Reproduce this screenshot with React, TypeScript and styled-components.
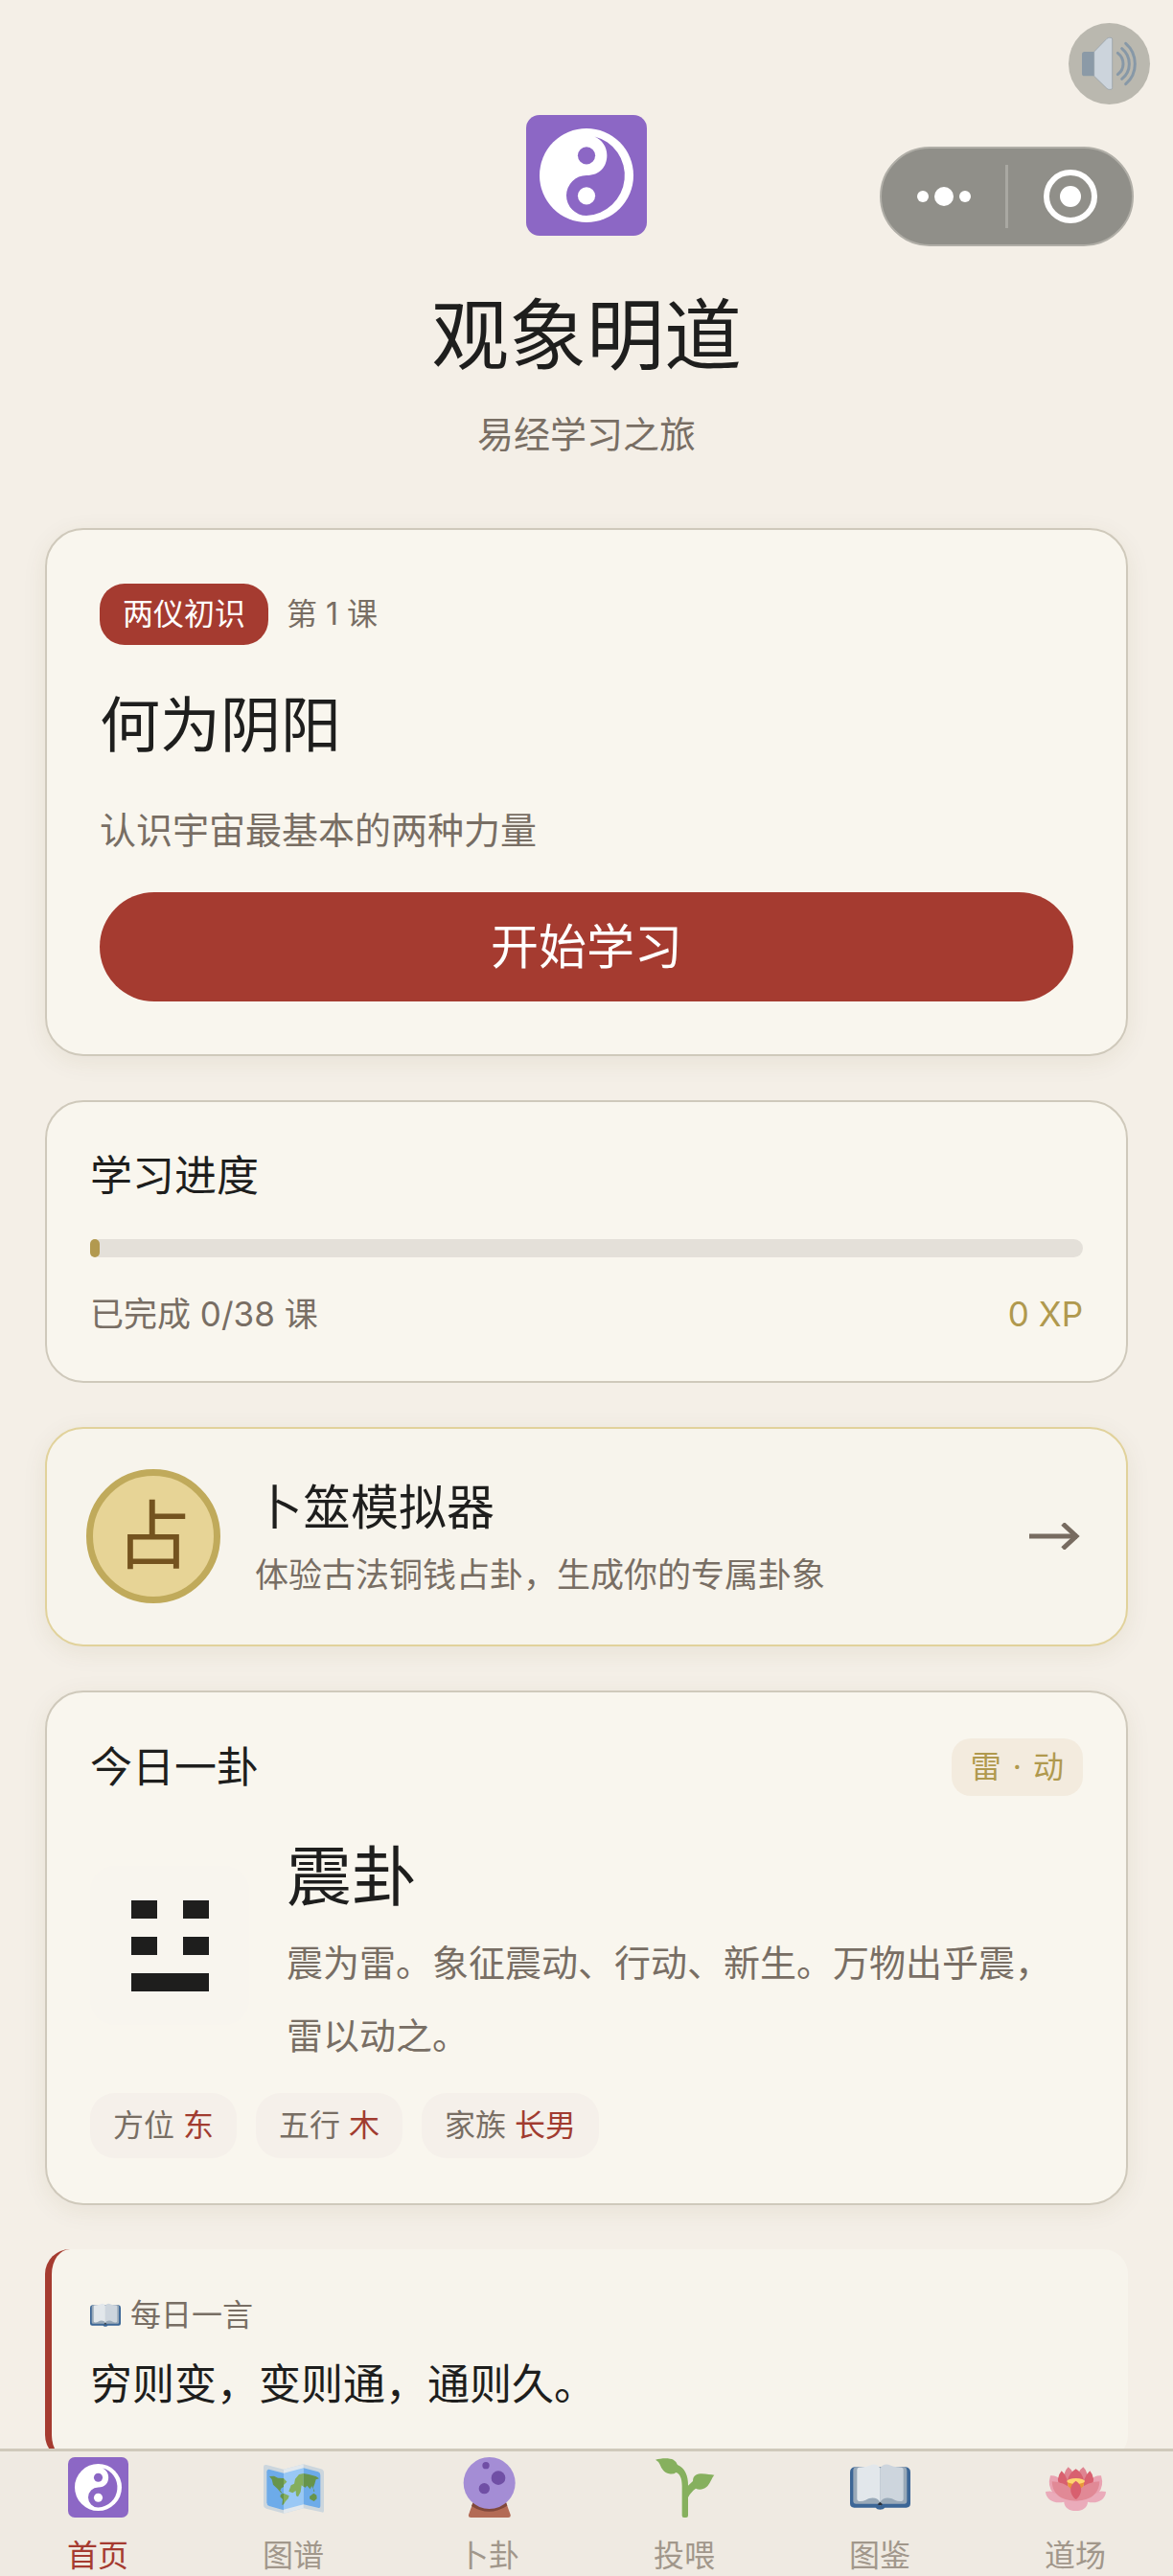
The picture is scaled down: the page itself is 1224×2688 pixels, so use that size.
import React from "react";
import styled, { createGlobalStyle } from "styled-components";

const c = {
  page: "#f4efe7",
  card: "#f9f6ee",
  cardSoft: "#f7f4ec",
  line: "#cfc9bb",
  ink: "#1e1e1d",
  muted: "#786e64",
  red: "#a53b30",
  gold: "#b0994e",
};

const GlobalStyle = createGlobalStyle`
  *, *::before, *::after { box-sizing: border-box; }
  body {
    margin: 0;
    background: ${c.page};
    color: ${c.ink};
    font-family: Inter, "Noto Sans CJK SC", sans-serif;
  }
  h1, h2, h3, p, ul { margin: 0; padding: 0; font-weight: 400; }
  ul { list-style: none; }
  button { font-family: inherit; border: 0; padding: 0; cursor: pointer; }
  a { color: inherit; text-decoration: none; }
  svg { display: block; }
`;

const Page = styled.div`
  position: relative;
  min-height: 100vh;
  padding: 0 47px 112px;
`;

const Header = styled.header`
  display: flex;
  flex-direction: column;
  align-items: center;
  padding: 120px 0 70px;
`;

const AppTitle = styled.h1`
  margin-top: 48px;
  font-size: 81px;
  line-height: 112px;
`;

const Subtitle = styled.p`
  margin-top: 19px;
  font-size: 38px;
  line-height: 56px;
  color: ${c.muted};
`;

const MuteButton = styled.button`
  position: absolute;
  top: 24px;
  right: 24px;
  width: 85px;
  height: 85px;
  border-radius: 50%;
  background: #bab8af;
`;

const Capsule = styled.div`
  position: absolute;
  top: 153px;
  right: 41px;
  display: flex;
  align-items: center;
  width: 265px;
  height: 104px;
  border: 2px solid #b0aea7;
  border-radius: 52px;
  background: #908f89;
`;

const CapsuleButton = styled.button`
  flex: 1;
  height: 100%;
  display: flex;
  align-items: center;
  justify-content: center;
  background: none;
`;

const CapsuleDivider = styled.span`
  width: 3px;
  height: 66px;
  background: #a9a8a2;
`;

const Stack = styled.main`
  display: flex;
  flex-direction: column;
  gap: 46px;
`;

const Card = styled.section<{ $raised?: boolean }>`
  border: 2px solid ${c.line};
  border-radius: 40px;
  background: ${c.card};
  box-shadow: ${(p) => (p.$raised ? "0 6px 26px rgba(90, 80, 30, 0.08)" : "none")};
`;

const LessonCard = styled(Card)`
  display: flex;
  flex-direction: column;
  padding: 56px 55px 55px;
`;

const LessonMeta = styled.div`
  display: flex;
  align-items: center;
  gap: 19px;
  font-size: 32px;
  line-height: 64px;
  color: ${c.muted};
`;

const Badge = styled.span`
  padding: 0 24px;
  border-radius: 26px;
  background: ${c.red};
  color: #fff;
`;

const LessonTitle = styled.h2`
  margin-top: 39px;
  font-size: 63px;
  line-height: 88px;
`;

const LessonText = styled.p`
  margin-top: 34px;
  font-size: 38px;
  line-height: 64px;
  color: ${c.muted};
`;

const StartButton = styled.button`
  margin-top: 33px;
  border-radius: 57px;
  background: ${c.red};
  color: #fff;
  font-size: 50px;
  line-height: 114px;
`;

const ProgressCard = styled(Card)`
  padding: 45px 45px 46px;
`;

const SectionTitle = styled.h2`
  font-size: 44px;
  line-height: 64px;
`;

const Track = styled.div`
  height: 19px;
  margin: 34px 0 35px;
  border-radius: 10px;
  background: #e4e0d9;
`;

const Fill = styled.div`
  min-width: 10px;
  height: 100%;
  border-radius: 5px;
  background: #b2994f;
`;

const ProgressRow = styled.div`
  display: flex;
  justify-content: space-between;
  font-size: 35px;
  line-height: 48px;
  color: ${c.muted};
`;

const Points = styled.span`
  color: ${c.gold};
`;

const DivineLink = styled.a`
  display: flex;
  align-items: center;
  gap: 36px;
  padding: 42px 47px 43px 41px;
  border: 2px solid #e1d29b;
  border-radius: 40px;
  background: ${c.cardSoft};
  box-shadow: 0 6px 26px rgba(90, 80, 30, 0.08);
`;

const Coin = styled.span`
  display: flex;
  flex: none;
  align-items: center;
  justify-content: center;
  width: 140px;
  height: 140px;
  border: 7px solid #c0aa5b;
  border-radius: 50%;
  background: #e7d496;
  color: #74531f;
  font-size: 78px;
  line-height: 1;
`;

const DivineText = styled.span`
  display: flex;
  flex: 1;
  flex-direction: column;
  gap: 12px;
`;

const DivineTitle = styled.span`
  font-size: 50px;
  line-height: 68px;
`;

const DivineDesc = styled.span`
  font-size: 35px;
  line-height: 48px;
  color: ${c.muted};
`;

const DailyCard = styled(Card)`
  padding: 46px 45px 47px;
`;

const DailyHead = styled.div`
  display: flex;
  align-items: center;
  justify-content: space-between;
`;

const Tag = styled.span`
  display: flex;
  gap: 12px;
  padding: 0 20px;
  border-radius: 20px;
  background: #f3ebde;
  color: ${c.gold};
  font-size: 32px;
  line-height: 60px;
`;

const DailyBody = styled.div`
  display: flex;
  align-items: center;
  gap: 39px;
  margin: 22px 0;
`;

const Trigram = styled.div`
  display: flex;
  flex: none;
  flex-direction: column;
  align-items: center;
  justify-content: center;
  gap: 19px;
  width: 166px;
  height: 166px;
  border-radius: 26px;
  background: #f8f5ee;
`;

const Yao = styled.div<{ $broken?: boolean }>`
  width: 81px;
  height: 19px;
  border: solid ${c.ink};
  border-width: 0 27px;
  background: ${(p) => (p.$broken ? "transparent" : c.ink)};
`;

const GuaName = styled.h3`
  padding-top: 8px;
  font-size: 68px;
  line-height: 104px;
`;

const GuaText = styled.p`
  font-size: 38px;
  line-height: 76px;
  color: ${c.muted};
`;

const Chips = styled.ul`
  display: flex;
  gap: 20px;
`;

const Chip = styled.li`
  display: flex;
  gap: 9px;
  padding: 0 24px;
  border-radius: 26px;
  background: #f5f0ea;
  font-size: 32px;
  line-height: 68px;
  color: ${c.muted};
`;

const ChipValue = styled.span`
  color: #a13c30;
`;

const QuoteCard = styled.section`
  padding: 45px 47px 43px 40px;
  border-left: 7px solid ${c.red};
  border-radius: 26px;
  background: ${c.cardSoft};
`;

const QuoteLabel = styled.div`
  display: flex;
  align-items: center;
  gap: 10px;
  font-size: 32px;
  line-height: 48px;
  color: ${c.muted};
`;

const QuoteText = styled.p`
  margin-top: 12px;
  font-size: 44px;
  line-height: 72px;
`;

const TabBar = styled.nav`
  position: fixed;
  right: 0;
  bottom: 0;
  left: 0;
  display: flex;
  border-top: 3px solid ${c.line};
  background: #efeae2;
`;

const Tab = styled.a<{ $active?: boolean }>`
  display: flex;
  flex: 1;
  flex-direction: column;
  align-items: center;
  gap: 20px;
  padding: 6px 0 1px;
  font-size: 32px;
  line-height: 40px;
  color: ${(p) => (p.$active ? c.red : "#a1978b")};
`;

type IconProps = { size?: number };

const YinYang = ({ size = 63 }: IconProps) => (
  <svg width={size} height={size} viewBox="0 0 36 36" aria-hidden="true">
    <rect width="36" height="36" rx="4" fill="#8c67c5" />
    <circle cx="18" cy="18" r="14" fill="#fff" />
    <path
      d="M20.4 6.4A12 12 0 0 1 18 30A6 6 0 0 1 18 18C22 18 24.1 15.4 24.1 12C24.1 9.4 22.6 7.4 20.4 6.4Z"
      fill="#8c67c5"
    />
    <circle cx="18" cy="12.1" r="2.6" fill="#8c67c5" />
    <circle cx="18" cy="24.1" r="2.6" fill="#fff" />
  </svg>
);

const MapIcon = ({ size = 63 }: IconProps) => (
  <svg width={size} height={size} viewBox="0 0 189 189" aria-hidden="true">
    <path
      d="M9 24L63 38L125 22L180 37Q189 40 189 48V168Q189 175 181 172L125 160L63 176L9 161Q0 158 0 150V31Q0 22 9 24Z"
      fill="#ccd6dd"
    />
    <path d="M63 38L125 22V160L63 176Z" fill="#e1e8ed" />
    <path d="M17 38L63 50V166L18 153Q10 150 10 142V46Q10 37 17 38Z" fill="#6dabe9" />
    <path d="M63 50L125 34V148L63 164Z" fill="#99c8f5" />
    <path d="M125 34L171 46Q178 49 178 56V153Q178 161 170 158L125 148Z" fill="#6dabe9" />
    <path
      d="M18 60L33 59L45 65L63 66V93L56 97L52 104L60 113L54 111L43 98L30 86L26 70ZM54 116L63 113V148L58 150L60 132L52 124Z"
      fill="#67944b"
    />
    <path
      d="M63 66L73 77L63 87ZM63 113L80 121L77 130L69 138L63 148ZM125 51V92L119 88L116 109L108 124L102 121L101 105L91 112L79 107L86 88L96 83L99 68L111 54Z"
      fill="#84ae5e"
    />
    <path
      d="M125 51L142 54L164 60L174 67L164 70L160 84L154 98L151 90L146 100L136 89L131 95L125 92ZM155 95L160 107L157 108ZM144 123L157 113L166 119L167 130L158 138L145 131Z"
      fill="#67944b"
    />
  </svg>
);

const CrystalBall = ({ size = 63 }: IconProps) => (
  <svg width={size} height={size} viewBox="0 0 189 189" aria-hidden="true">
    <path d="M44 142H147L161 180Q163 189 154 189H37Q28 189 30 180Z" fill="#b36b55" />
    <path d="M44 142H147L151 152Q94 188 39 153Z" fill="#80483b" />
    <circle cx="95" cy="81" r="81" fill="#a48dd5" />
    <circle cx="84" cy="26" r="11" fill="#704fa5" />
    <circle cx="123" cy="65" r="22" fill="#704fa5" />
    <circle cx="79" cy="98" r="17" fill="#704fa5" />
  </svg>
);

const Seedling = ({ size = 63 }: IconProps) => (
  <svg width={size} height={size} viewBox="0 0 189 189" aria-hidden="true">
    <path
      d="M3 8C22 2 48 2 59 8Q69 14 72 24C95 34 106 58 105 89L120 75C120 56 134 52 148 52C163 52 178 56 187 56C178 66 175 82 163 93C152 102 139 103 129 98C118 106 110 116 105 126V183Q105 189 99 189H92Q86 189 86 183V90C86 66 79 51 67 48Q60 54 46 52C30 48 22 36 17 23Q13 13 3 8Z"
      fill="#86b05e"
    />
  </svg>
);

const OpenBook = ({ size = 63 }: IconProps) => (
  <svg width={size} height={size} viewBox="0 0 189 189" aria-hidden="true">
    <path
      d="M15 31H174Q189 33 189 47V145Q189 158 176 158H109Q105 164 94 164Q84 164 80 158H13Q0 158 0 145V47Q0 33 15 31Z"
      fill="#3c6696"
    />
    <path d="M18 31H171Q178 33 178 42V137Q178 146 170 146H100L94 152L88 146H19Q10 146 10 137V42Q10 33 18 31Z" fill="#99a9b8" />
    <path d="M22 39Q22 33 28 32C48 31 59 27 69 23Q86 20 94 35V141C86 125 66 124 49 134Q40 139 28 138Q22 137 22 131Z" fill="#e2e7eb" />
    <path d="M167 39Q167 33 161 32C141 31 130 27 120 23Q103 20 94 35V141C103 125 123 124 140 134Q149 139 161 138Q167 137 167 131Z" fill="#cdd5dd" />
    <path d="M94 140L102 148Q94 154 86 148Z" fill="#29303a" />
  </svg>
);

const Lotus = ({ size = 63 }: IconProps) => (
  <svg width={size} height={size} viewBox="0 0 189 189" aria-hidden="true">
    <path d="M0 108Q24 102 48 117L95 126L141 117Q165 102 189 108C188 132 163 148 132 140C132 157 116 168 95 168C74 168 58 157 58 140C27 148 1 132 0 108Z" fill="#eaabba" />
    <path d="M15 58Q31 55 47 69L95 124L142 69Q158 55 174 58Q184 91 165 112L95 130L24 112Q5 91 15 58Z" fill="#e9a3b2" />
    <path d="M71 31Q91 45 91 75H57Q56 45 71 31ZM118 31Q98 45 98 75H132Q133 45 118 31Z" fill="#df8491" />
    <path d="M50 43Q72 61 72 106L46 94Q30 67 50 43ZM139 43Q117 61 117 106L143 94Q159 67 139 43ZM95 37Q115 48 120 74H69Q74 48 95 37Z" fill="#d8606f" />
    <path d="M68 76H121L116 109H73Z" fill="#e9963a" />
    <ellipse cx="95" cy="75" rx="28" ry="9" fill="#fed571" />
    <path d="M20 76C60 79 91 95 95 137C61 136 22 125 20 76ZM169 76C129 79 98 95 95 137C128 136 167 125 169 76Z" fill="#e18996" />
    <path d="M95 74C117 88 117 114 95 133C73 114 73 88 95 74Z" fill="#d8606f" />
  </svg>
);

const Speaker = () => (
  <svg width="85" height="85" viewBox="45 42 255 255" aria-hidden="true">
    <rect x="87" y="132" width="46" height="76" rx="8" fill="#8b9aa7" />
    <path d="M125 132L165 91Q168 88 173 88H177Q182 88 182 93V245Q182 250 177 250H173Q168 250 165 247L125 208Z" fill="#ccd4dc" stroke="#929da6" strokeWidth="2" />
    <g fill="none" stroke="#8798a7" strokeWidth="9" strokeLinecap="round">
      <path d="M199 136Q216 149 216 170Q216 190 199 203" />
      <path d="M212 122Q235 141 235 170Q235 199 212 217" />
      <path d="M224 106Q253 131 253 170Q253 208 224 233" />
    </g>
  </svg>
);

const MoreDots = () => (
  <svg width="58" height="24" viewBox="0 0 58 24" fill="#fff" aria-hidden="true">
    <circle cx="7" cy="12" r="6" />
    <circle cx="29" cy="12" r="10" />
    <circle cx="51" cy="12" r="6" />
  </svg>
);

const CloseRing = () => (
  <svg width="56" height="56" viewBox="0 0 56 56" aria-hidden="true">
    <circle cx="28" cy="28" r="25" fill="none" stroke="#fff" strokeWidth="6" />
    <circle cx="28" cy="28" r="11" fill="#fff" />
  </svg>
);

const Arrow = () => (
  <svg width="54" height="28" viewBox="0 0 54 28" fill="none" stroke="#776b60" strokeWidth="5" aria-hidden="true">
    <path d="M0 14H50" />
    <path d="M35 1L49 14L35 27" />
  </svg>
);

const chips = [
  { label: "方位", value: "东" },
  { label: "五行", value: "木" },
  { label: "家族", value: "长男" },
];

const tabs = [
  { label: "首页", Icon: YinYang },
  { label: "图谱", Icon: MapIcon },
  { label: "卜卦", Icon: CrystalBall },
  { label: "投喂", Icon: Seedling },
  { label: "图鉴", Icon: OpenBook },
  { label: "道场", Icon: Lotus },
];

const done = 0;
const total = 38;

export default function App() {
  return (
    <>
      <GlobalStyle />
      <Page lang="zh-CN">
        <Header>
          <YinYang size={126} />
          <AppTitle>观象明道</AppTitle>
          <Subtitle>易经学习之旅</Subtitle>
        </Header>
        <MuteButton type="button" aria-label="声音">
          <Speaker />
        </MuteButton>
        <Capsule>
          <CapsuleButton type="button" aria-label="更多">
            <MoreDots />
          </CapsuleButton>
          <CapsuleDivider />
          <CapsuleButton type="button" aria-label="关闭">
            <CloseRing />
          </CapsuleButton>
        </Capsule>

        <Stack>
          <LessonCard $raised>
            <LessonMeta>
              <Badge>两仪初识</Badge>
              <span>第 1 课</span>
            </LessonMeta>
            <LessonTitle>何为阴阳</LessonTitle>
            <LessonText>认识宇宙最基本的两种力量</LessonText>
            <StartButton type="button">开始学习</StartButton>
          </LessonCard>

          <ProgressCard>
            <SectionTitle>学习进度</SectionTitle>
            <Track role="progressbar" aria-label="学习进度" aria-valuenow={done} aria-valuemax={total}>
              <Fill style={{ width: `${(done / total) * 100}%` }} />
            </Track>
            <ProgressRow>
              <span>{`已完成 ${done}/${total} 课`}</span>
              <Points>0 XP</Points>
            </ProgressRow>
          </ProgressCard>

          <DivineLink href="#divine">
            <Coin>占</Coin>
            <DivineText>
              <DivineTitle>卜筮模拟器</DivineTitle>
              <DivineDesc>体验古法铜钱占卦，生成你的专属卦象</DivineDesc>
            </DivineText>
            <Arrow />
          </DivineLink>

          <DailyCard $raised>
            <DailyHead>
              <SectionTitle>今日一卦</SectionTitle>
              <Tag>
                <span>雷</span>
                <span>·</span>
                <span>动</span>
              </Tag>
            </DailyHead>
            <DailyBody>
              <Trigram role="img" aria-label="震">
                <Yao $broken />
                <Yao $broken />
                <Yao />
              </Trigram>
              <div>
                <GuaName>震卦</GuaName>
                <GuaText>震为雷。象征震动、行动、新生。万物出乎震，雷以动之。</GuaText>
              </div>
            </DailyBody>
            <Chips>
              {chips.map((chip) => (
                <Chip key={chip.label}>
                  {chip.label}
                  <ChipValue>{chip.value}</ChipValue>
                </Chip>
              ))}
            </Chips>
          </DailyCard>

          <QuoteCard>
            <QuoteLabel>
              <OpenBook size={32} />
              每日一言
            </QuoteLabel>
            <QuoteText>穷则变，变则通，通则久。</QuoteText>
          </QuoteCard>
        </Stack>
      </Page>

      <TabBar>
        {tabs.map(({ label, Icon }, i) => (
          <Tab key={label} href={`#${i}`} $active={i === 0} aria-current={i === 0 ? "page" : undefined}>
            <Icon />
            {label}
          </Tab>
        ))}
      </TabBar>
    </>
  );
}
